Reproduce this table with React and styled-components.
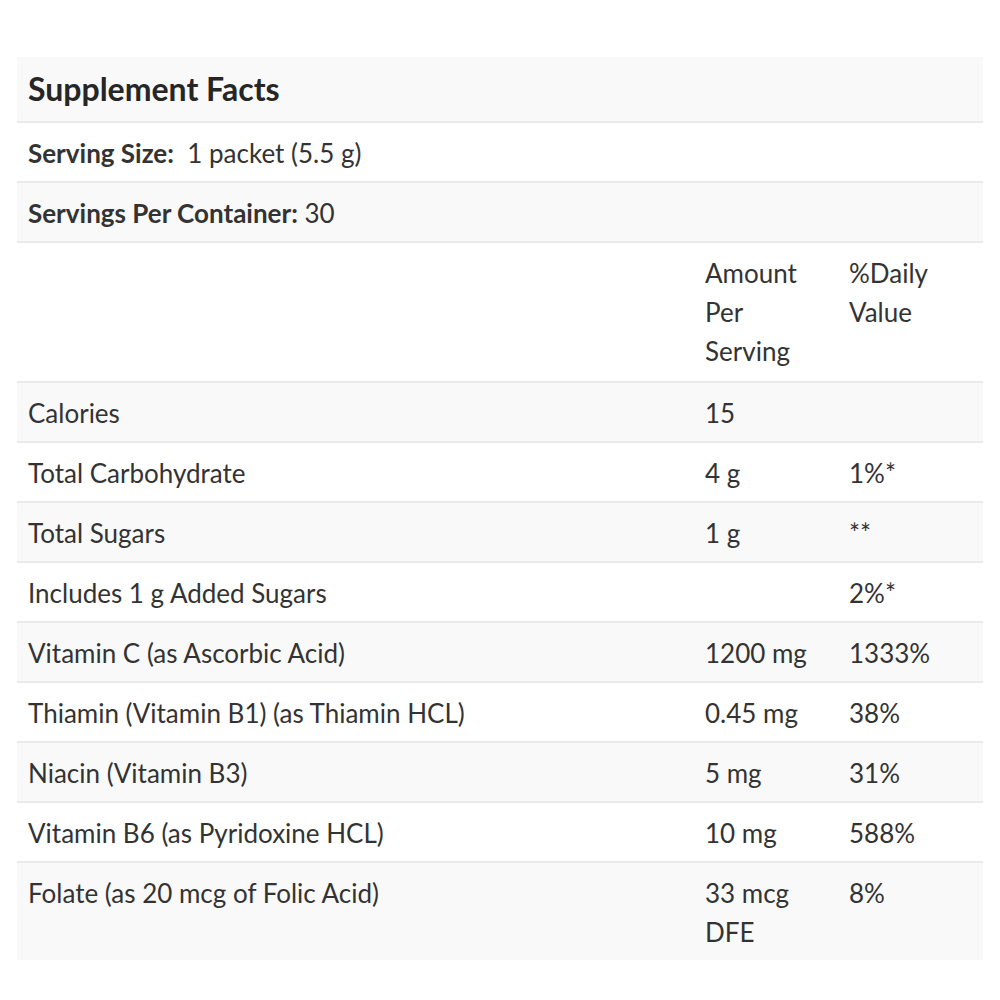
import React from 'react'
import styled, {createGlobalStyle} from 'styled-components'

const Global = createGlobalStyle`
  body {
    margin: 0;
    background: #fff;
    font-family: Lato, "Open Sans", sans-serif;
    color: #333;
  }
`

const Page = styled.div`
  padding: 57px 17px 40px 17px;
`

const Table = styled.table`
  width: 100%;
  border-collapse: collapse;
  font-size: 26px;
  line-height: 39px;
`

const Row = styled.tr`
  background: ${props => (props.$shaded ? '#f9f9f9' : '#fff')};
  border-bottom: ${props => (props.$last ? 'none' : '2px solid #ebebeb')};
`

const Cell = styled.td`
  padding: 11px 11px ${props => (props.$tall ? '10px' : '8px')};
  vertical-align: top;
  width: ${props => props.$width || 'auto'};
`

const Title = styled.td`
  padding: 11px 11px 11px;
  font-size: 32px;
  line-height: 42px;
  font-weight: 700;
  color: #262626;
`

const Label = styled.span`
  font-weight: 700;
`

const nutrients = [
  ['Calories', '15', ''],
  ['Total Carbohydrate', '4 g', '1%*'],
  ['Total Sugars', '1 g', '**'],
  ['Includes 1 g Added Sugars', '', '2%*'],
  ['Vitamin C (as Ascorbic Acid)', '1200 mg', '1333%'],
  ['Thiamin (Vitamin B1) (as Thiamin HCL)', '0.45 mg', '38%'],
  ['Niacin (Vitamin B3)', '5 mg', '31%'],
  ['Vitamin B6 (as Pyridoxine HCL)', '10 mg', '588%'],
  ['Folate (as 20 mcg of Folic Acid)', '33 mcg DFE', '8%'],
]

const App = () => (
  <Page>
    <Global />
    <Table>
      <tbody>
        <Row $shaded>
          <Title colSpan={3}>Supplement Facts</Title>
        </Row>
        <Row>
          <Cell colSpan={3}>
            <Label>Serving Size:</Label>&nbsp; 1 packet (5.5 g)
          </Cell>
        </Row>
        <Row $shaded>
          <Cell colSpan={3}>
            <Label>Servings Per Container:</Label> 30
          </Cell>
        </Row>
        <Row>
          <Cell $tall />
          <Cell $tall $width="122px">Amount Per Serving</Cell>
          <Cell $tall $width="123px">%Daily Value</Cell>
        </Row>
        {nutrients.map(([name, amount, dv], i) => (
          <Row
            key={name}
            $shaded={i % 2 === 0}
            $last={i === nutrients.length - 1}
          >
            <Cell>{name}</Cell>
            <Cell>{amount}</Cell>
            <Cell>{dv}</Cell>
          </Row>
        ))}
      </tbody>
    </Table>
  </Page>
)

export default App
